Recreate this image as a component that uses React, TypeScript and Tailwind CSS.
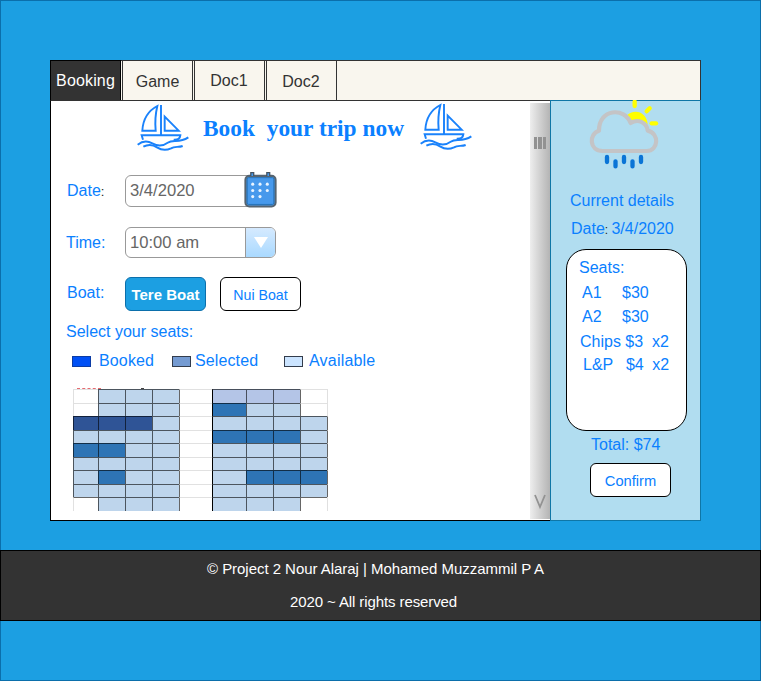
import type { ReactNode } from "react";

function Boat() {
  return (
    <svg width="52" height="48" viewBox="36 27 156 144" fill="none" stroke="#1a82fb" strokeWidth="5.800" className="shrink-0">
      <path d="M97 33C72 46 54 72 52 107H92C90 86 91 58 97 33Z" />
      <path d="M108 30V120" />
      <path d="M119 65V107H161Z" />
      <path d="M54 134L50 121H166C165 130 158 135 146 134" />
      <path d="M38 149C53 137 68 137 82 145C98 154 112 155 128 143C145 131 160 147 190 127" />
      <path d="M55 155C70 147 84 149 96 157C113 168 125 166 138 160C149 153 160 158 173 153" />
    </svg>
  );
}

function Weather() {
  return (
    <svg width="74" height="72" viewBox="84 30 222 216" fill="none" className="shrink-0">
      <g stroke="#ffff00" strokeWidth="13" strokeLinecap="round">
        <path d="M224 35V48" />
        <path d="M260 64L269 55" />
        <path d="M275 100H288" />
      </g>
      <path d="M199 77C223 53 262 66 263 104C249 94 237 85 214 97Z" fill="#ffff00" />
      <path
        d="M128 183C87 183 86 131 117 122C116 55 195 51 212 99C235 85 261 98 263 122C299 129 296 183 260 183Z"
        stroke="#c4c4c6"
        strokeWidth="12.500"
        strokeLinejoin="round"
      />
      <g stroke="#0a74d6" strokeWidth="13" strokeLinecap="round">
        <path d="M141 201V216M192 201V216M243 201V216M166.500 214V229M217.500 214V229" />
      </g>
    </svg>
  );
}

function Calendar() {
  return (
    <svg width="33" height="37" viewBox="0 0 34 38" className="-mt-[5px] -mr-1 shrink-0">
      <rect x="1.500" y="5" width="31" height="31.500" rx="4" fill="#4799ec" stroke="#566470" strokeWidth="2.200" />
      <rect x="3.300" y="6.800" width="27.400" height="27.600" rx="1.500" fill="none" stroke="#2672b5" strokeWidth="1" />
      <path d="M7 5V1.500H10V5M23.500 5V1.500H26.500V5" fill="#4799ec" stroke="#44525f" strokeWidth="1.300" />
      <g fill="#e9f4ff">
        {[13.5, 20, 26.3].map((y, r) =>
          [9, 16.5, 24].map((x, c) => (r === 2 && c === 2 ? null : <circle key={`${x}-${y}`} cx={x} cy={y} r="1.600" />)),
        )}
      </g>
    </svg>
  );
}

const seatRows = [
  ".aaa.ppp.",
  ".aaa.baa.",
  "ddda.aaaa",
  "aaaa.bbba",
  "bbaa.aaaa",
  "aaaa.aaaa",
  "abaa.abbb",
  "aaaa.aaaa",
  ".aaa.aaa.",
];

const seatColor: Record<string, string> = {
  a: "bg-[#bed5ec]",
  b: "bg-[#2e74b5]",
  d: "bg-[#2f5496]",
  p: "bg-[#b4c5e7]",
  ".": "bg-white",
};

function Seats() {
  const filled = (r: number, c: number) => /[abdp]/.test(seatRows[r]?.[c] ?? ".");
  return (
    <div className="ml-[22px] grid h-[122px] w-[255px] grid-cols-[25px_27px_27px_27px_33px_34px_27px_27px_27px_1px] grid-rows-[14px_13px_14px_13px_14px_13px_14px_13px_14px] overflow-hidden">
      {seatRows.flatMap((row, r) =>
        (row + ".").split("").map((s, c) => {
          const top = filled(r, c) || filled(r - 1, c) ? "border-t-black/60" : "border-t-black/12";
          const left =
            c === 5
              ? "border-l-black"
              : filled(r, c) || filled(r, c - 1)
                ? "border-l-black/60"
                : "border-l-black/12";
          return <div key={`${r}-${c}`} className={`border-t border-l ${seatColor[s]} ${top} ${left}`} />;
        }),
      )}
    </div>
  );
}

function Tab({ children, active, pad }: { children: ReactNode; active?: boolean; pad: string }) {
  return (
    <div
      className={`h-10 w-[71px] shrink-0 text-center leading-[18px] ${pad} ${
        active
          ? "border border-b-0 border-black bg-[#333333] tracking-[0.15px] text-white"
          : "border border-b-0 border-[#333333] text-[#333333]"
      }`}
    >
      {children}
    </div>
  );
}

function Main() {
  return (
    <main className="flex w-[500px] border-t border-b border-l border-t-[#333333] border-b-black border-l-black bg-white">
      <div className="w-[479px] overflow-hidden">
        <div className="ml-[86px] flex h-[70px] items-start pt-[3px]">
          <Boat />
          <h1 className="mt-[11px] ml-[14px] w-[217px] font-['Liberation_Serif',serif] text-[23.400px] leading-[27px] font-bold whitespace-pre">
            Book  your trip now
          </h1>
          <div className="-mt-px">
            <Boat />
          </div>
        </div>
        <div className="ml-4 flex h-[56px] pt-1">
          <div className="mt-[7px] w-[58px] leading-[18px]">
            Date<span className="text-[13px] text-[#222222]">:</span>
          </div>
          <div className="flex h-8 w-[151px] rounded-md border border-[#999999] text-[16.600px] leading-[30px] text-[#666666]">
            <span className="w-[118px] shrink-0 pl-1">3/4/2020</span>
            <Calendar />
          </div>
        </div>
        <div className="ml-[15px] flex h-[50px]">
          <div className="mt-[7px] w-[59px] leading-[18px]">Time:</div>
          <div className="flex h-[31px] w-[151px] overflow-hidden rounded-md border border-[#999999] text-[16.600px] leading-[30px] text-[#666666]">
            <span className="w-[119px] pl-1">10:00 am</span>
            <span className="flex flex-1 items-center justify-center border-l border-[#999999] bg-linear-to-b from-[#d5eaff] to-[#a9d9ff]">
              <svg width="14" height="11" viewBox="0 0 14 11">
                <path d="M0 0H14L7 11Z" fill="white" />
              </svg>
            </span>
          </div>
        </div>
        <div className="ml-4 flex h-[46px]">
          <div className="mt-[7px] w-[58px] leading-[18px]">Boat:</div>
          <button className="h-[34px] w-[81px] rounded-md border border-[#0b6fab] bg-[#1c9fe2] pt-0.5 text-[15px] font-bold text-white">
            Tere Boat
          </button>
          <button className="ml-[14px] h-[34px] w-[81px] rounded-md border border-black pt-[3px] text-[14.200px]">Nui Boat</button>
        </div>
        <div className="ml-[15px] h-[29px] leading-[18px]">Select your seats:</div>
        <div className="ml-[21px] flex h-[36px] leading-[18px]">
          <i className="mt-[4px] h-[11px] w-[19px] border border-[#0c3ca5] bg-[#0050f5]" />
          <span className="ml-2 w-[73px] tracking-[0.15px]">Booked</span>
          <i className="mt-[4px] h-[11px] w-[19px] border border-[#333c4c] bg-[#759bd2]" />
          <span className="ml-1 w-[89px] tracking-[0.12px]">Selected</span>
          <i className="mt-[4px] h-[11px] w-[19px] border border-[#333c4c] bg-[#cbe4ff]" />
          <span className="ml-1.5 tracking-[0.2px]">Available</span>
        </div>
        <div className="ml-[26px] flex h-px">
          <i className="w-6 border-t border-dashed border-[#e66b70]" />
          <i className="ml-10 w-[3px] bg-[#444444]" />
        </div>
        <Seats />
      </div>
      <div className="mt-[2px] mb-px flex w-5 flex-col items-center justify-between bg-linear-to-r from-[#eeeeee] to-[#b4b4b4] pt-[34px] pb-[9px]">
        <div className="flex h-3 w-3 gap-px">
          <i className="w-[3px] bg-[#929292]" />
          <i className="w-[4px] bg-[#929292]" />
          <i className="w-[3px] bg-[#929292]" />
        </div>
        <svg width="12" height="16" viewBox="0 0 12 16" fill="none" stroke="#929292" strokeWidth="1.800">
          <path d="M1 1L6 13L11 1" />
        </svg>
      </div>
    </main>
  );
}

function Line({ children, className }: { children: ReactNode; className: string }) {
  return <div className={`leading-[18px] whitespace-pre ${className}`}>{children}</div>;
}

function Summary() {
  return (
    <aside className="flex w-[151px] flex-col border border-[#0f76a6] bg-[#b1ddf0]">
      <div className="-mt-px ml-[37px] h-[92px]">
        <Weather />
      </div>
      <Line className="ml-[19px] h-7">Current details</Line>
      <Line className="ml-5 h-[29px]">
        Date<span className="text-[12px] text-[#222222]">: </span>3/4/2020
      </Line>
      <section className="ml-[15px] h-[182px] w-[121px] shrink-0 rounded-[20px] border border-black bg-white pt-[9px]">
        <Line className="ml-3 h-[25px]">Seats:</Line>
        <Line className="ml-[15px] flex h-6"><span className="w-10">A1</span><span>$30</span></Line>
        <Line className="ml-[15px] flex h-[25px]"><span className="w-10">A2</span><span>$30</span></Line>
        <Line className="ml-[13px] h-[23px]">Chips $3  x2</Line>
        <Line className="ml-4 flex"><span className="w-[43px]">L&amp;P</span><span className="tracking-[-0.1px]">$4  x2</span></Line>
      </section>
      <Line className="mt-[5px] ml-10 h-[27px]">Total: $74</Line>
      <button className="ml-[39px] h-[34px] w-[81px] shrink-0 rounded-md border border-black bg-white pt-0.5 text-[14.700px]">
        Confirm
      </button>
    </aside>
  );
}

export default function App() {
  return (
    <div className="flex h-[681px] w-[761px] flex-col border border-[#0b6fab] bg-[#1c9fe2] pt-[59px] font-['Liberation_Sans',Arial,sans-serif] text-base text-[#0a80ff]">
      <div className="ml-[49px] flex h-[461px] w-[651px] shrink-0 flex-col">
        <nav className="flex h-10 gap-px border-t border-r border-t-[#333333] border-r-[#333333] bg-[#f9f6ee] *:-mt-px">
          <Tab active pad="pt-[11px]">Booking</Tab>
          <Tab pad="pt-3">Game</Tab>
          <Tab pad="pt-[11px] pr-px">Doc1</Tab>
          <Tab pad="pt-3 pr-px">Doc2</Tab>
        </nav>
        <div className="flex h-[421px]">
          <Main />
          <Summary />
        </div>
      </div>
      <footer className="-mx-px mt-[29px] h-[71px] shrink-0 border border-black bg-[#333333] pt-[9px] text-[15px] leading-[18px] text-white">
        <p className="ml-[206px] tracking-[-0.04px]">© Project 2 Nour Alaraj | Mohamed Muzzammil P A</p>
        <p className="mt-[15px] ml-[289px] tracking-[-0.1px]">2020 ~ All rights reserved</p>
      </footer>
    </div>
  );
}
